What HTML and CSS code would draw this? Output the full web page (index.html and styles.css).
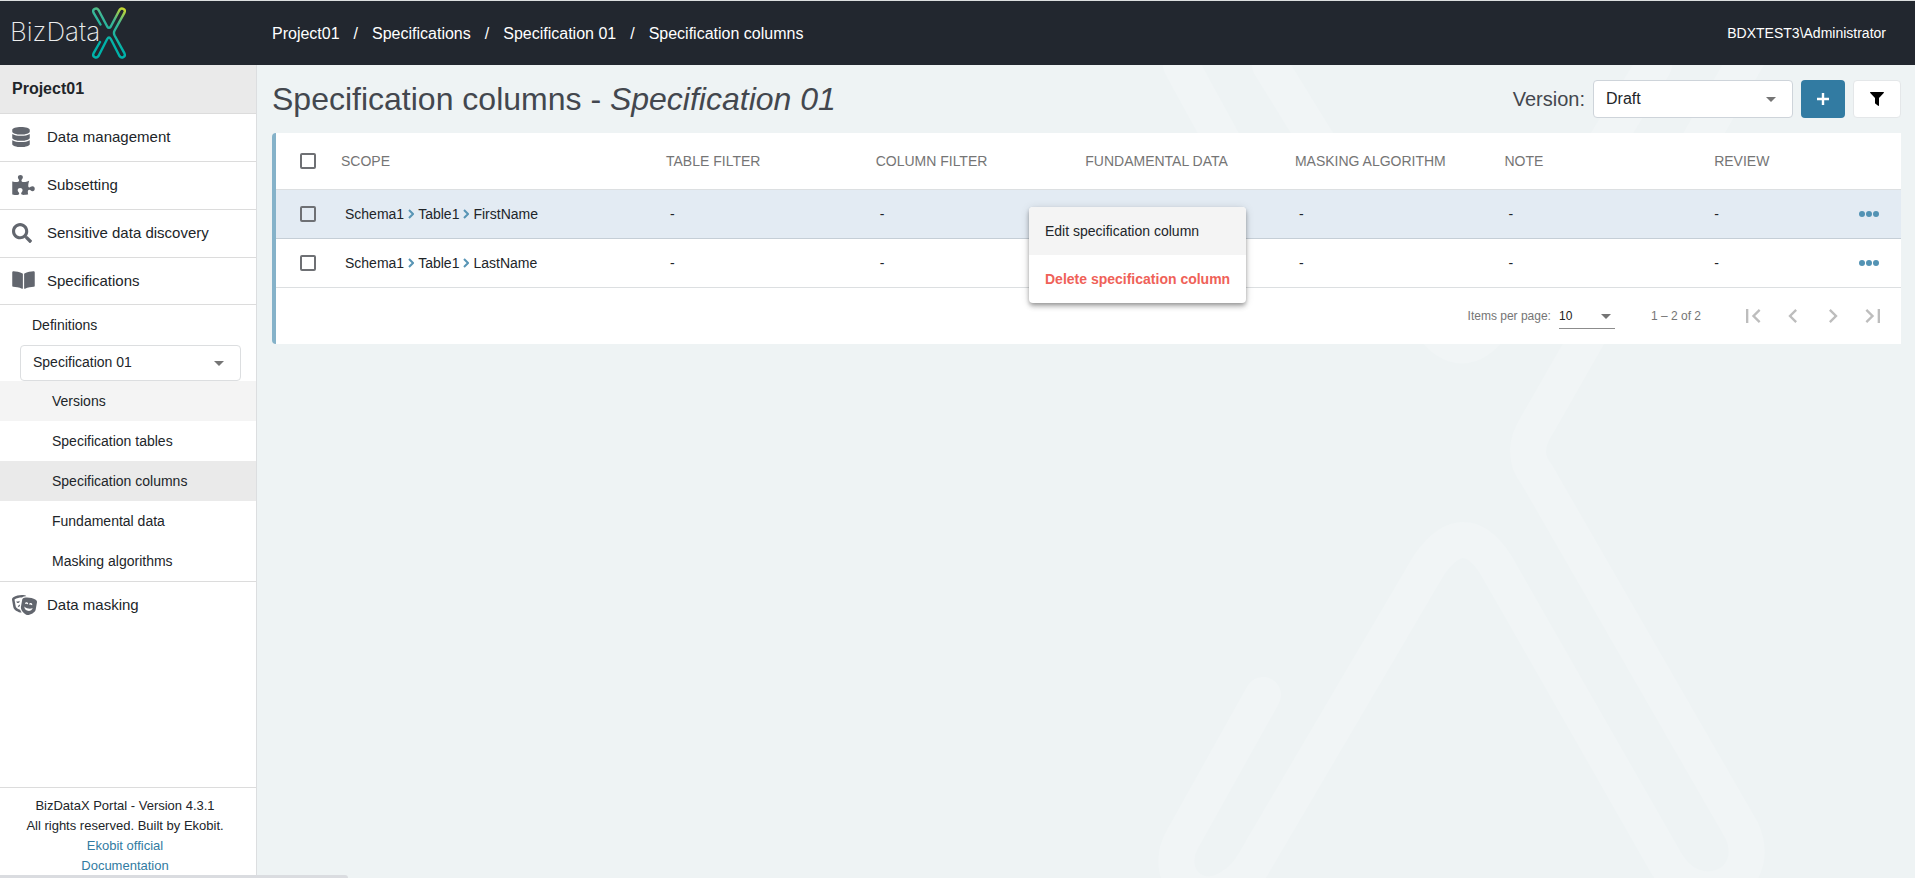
FILE: index.html
```html
<!DOCTYPE html>
<html lang="en">
<head>
<meta charset="utf-8">
<title>BizDataX Portal - Specification columns</title>
<link rel="stylesheet" href="styles.css">
</head>
<body>
<div class="app">
  <header class="topbar">
    <a class="logo" href="#" aria-label="BizDataX">
      <span class="logo-text">BizData</span>
      <svg class="logo-x" viewBox="0 0 34 52" width="34" height="52" aria-hidden="true">
        <defs>
          <linearGradient id="lg" gradientUnits="userSpaceOnUse" x1="33" y1="0" x2="14" y2="34">
            <stop offset="0" stop-color="#d9dc1f"/><stop offset=".45" stop-color="#3fb795"/><stop offset="1" stop-color="#00b2a9"/>
          </linearGradient>
        </defs>
        <g fill="none" stroke="url(#lg)" stroke-width="2.400" stroke-linecap="round" stroke-linejoin="round">
          <path d="M8.500 17.500L1.500 5.600C0 2 4.500 0 6.500 3L15.200 19.500Q17 22.300 18.800 19.500L27.500 3C29.500 0 34 2 32.500 5.600L22.600 23.500Q21.300 26 22.600 28.500L32.500 46.400C34 50 29.500 52 27.500 49L18.800 32Q17 29 15.200 32L6.500 49C4.500 52 0 50 1.500 46.400L8 35"/>
        </g>
      </svg>
    </a>
    <nav class="crumbs" aria-label="Breadcrumb">
      <a href="#">Project01</a><span>/</span><a href="#">Specifications</a><span>/</span><a href="#">Specification 01</a><span>/</span><a href="#">Specification columns</a>
    </nav>
    <span class="user">BDXTEST3\Administrator</span>
  </header>

  <aside class="sidebar">
    <div class="project">Project01</div>
    <nav class="nav">
      <a class="nav-item" href="#">
        <svg class="icon" viewBox="0 0 448 512" width="18" height="20"><path d="M448 73.143v45.714C448 159.143 347.667 192 224 192S0 159.143 0 118.857V73.143C0 32.857 100.333 0 224 0s224 32.857 224 73.143zM448 176v102.857C448 319.143 347.667 352 224 352S0 319.143 0 278.857V176c48.125 33.143 136.208 48.572 224 48.572S399.874 209.143 448 176zm0 160v102.857C448 479.143 347.667 512 224 512S0 479.143 0 438.857V336c48.125 33.143 136.208 48.572 224 48.572S399.874 369.143 448 336z"/></svg>
        Data management</a>
      <a class="nav-item" href="#">
        <svg class="icon" viewBox="0 0 576 512" width="23" height="20"><path d="M519.442 288.651c-41.519 0-59.5 31.593-82.058 31.593C377.409 320.244 432 144 432 144s-196.288 80-196.288-3.297c0-35.827 36.288-46.25 36.288-85.985C272 19.216 243.885 0 210.539 0c-34.654 0-66.366 18.891-66.366 56.346 0 41.364 31.711 59.277 31.711 81.75C175.885 207.719 0 166.758 0 166.758v333.237s178.635 41.047 178.635-28.662c0-22.473-40-40.107-40-81.471 0-37.456 29.25-56.346 63.577-56.346 33.673 0 61.788 19.216 61.788 54.717 0 39.735-36.288 50.158-36.288 85.985 0 60.803 129.675 25.73 181.23 25.73 0 0-34.725-120.101 25.827-120.101 35.962 0 46.423 36.152 86.308 36.152C556.712 416 576 387.990 576 354.443c0-34.199-18.962-65.792-56.558-65.792z"/></svg>
        Subsetting</a>
      <a class="nav-item" href="#">
        <svg class="icon" viewBox="0 0 512 512" width="20" height="20"><path d="M505 442.700L405.300 343c-4.500-4.500-10.600-7-17-7H372c27.600-35.300 44-79.700 44-128C416 93.100 322.900 0 208 0S0 93.100 0 208s93.100 208 208 208c48.300 0 92.700-16.400 128-44v16.300c0 6.400 2.500 12.500 7 17l99.700 99.700c9.400 9.400 24.600 9.400 33.900 0l28.300-28.300c9.400-9.400 9.400-24.600.1-34zM208 336c-70.700 0-128-57.200-128-128 0-70.700 57.200-128 128-128 70.700 0 128 57.200 128 128 0 70.700-57.200 128-128 128z"/></svg>
        Sensitive data discovery</a>
      <a class="nav-item open" href="#">
        <svg class="icon" viewBox="0 0 576 512" width="23" height="20"><path d="M542.220 32.050c-54.800 3.110-163.720 14.430-230.960 55.590-4.640 2.840-7.270 7.890-7.270 13.170v363.870c0 11.550 12.630 18.850 23.280 13.490 69.180-34.820 169.230-44.320 218.700-46.920 16.890-.89 30.020-14.430 30.020-30.660V62.750c.010-17.710-15.350-31.740-33.770-30.700zM264.730 87.640C197.500 46.480 88.580 35.170 33.780 32.050 15.360 31.010 0 45.040 0 62.750V400.600c0 16.240 13.130 29.780 30.020 30.660 49.490 2.600 149.590 12.110 218.770 46.950 10.620 5.350 23.210-1.940 23.210-13.460V100.630c0-5.290-2.620-10.140-7.270-12.990z"/></svg>
        Specifications</a>
      <div class="subnav">
        <a class="definitions" href="#">Definitions</a>
        <div class="select-wrap side-select">
          <select aria-label="Specification"><option>Specification 01</option></select>
        </div>
        <a class="sub-item hovered" href="#">Versions</a>
        <a class="sub-item" href="#">Specification tables</a>
        <a class="sub-item active" href="#" aria-current="page">Specification columns</a>
        <a class="sub-item" href="#">Fundamental data</a>
        <a class="sub-item" href="#">Masking algorithms</a>
      </div>
      <a class="nav-item last" href="#">
        <svg class="icon" viewBox="0 0 640 512" width="25" height="20"><path d="M206.860 245.150c-35.880 10.450-59.950 41.200-57.530 74.100 11.400-12.720 28.810-23.700 49.900-30.920l7.630-43.180zM95.810 295L64.080 115.490c-.29-1.620.28-2.620.24-2.650 57.760-32.060 123.120-49.010 189.010-49.010 1.610 0 3.230.17 4.850.19 13.950-13.470 31.730-22.830 51.590-26 18.890-3.020 38.050-4.550 57.180-5.320-9.990-13.950-24.480-24.230-41.770-27C301.270 1.890 277.240 0 253.320 0 176.660 0 101.020 19.420 33.200 57.060 9.030 70.480-3.920 98.480 1.050 126.580l31.730 179.510c14.230 80.520 136.330 142.080 204.450 142.080 3.590 0 6.750-.46 10.010-.8-13.520-17.080-28.940-40.480-39.500-67.580-47.610-12.980-106.060-51.620-111.930-84.790zm97.550-137.460c-.73-4.120-2.230-7.870-4.070-11.400-8.250 8.910-20.670 15.750-35.320 18.320-14.650 2.580-28.670.4-39.480-5.170-.52 3.940-.64 7.980.09 12.100 3.840 21.700 24.580 36.190 46.340 32.370 21.750-3.820 36.280-24.520 32.440-46.220zM606.800 120.900c-88.980-49.380-191.430-67.410-291.980-51.350-27.310 4.360-49.080 26.260-54.040 54.360l-31.730 179.510c-15.390 87.050 95.280 196.270 158.310 207.350 63.030 11.090 204.470-53.790 219.860-140.840l31.730-179.510c4.970-28.110-7.980-56.110-32.150-69.520zM333.790 217.800c3.840-21.700 24.580-36.190 46.340-32.360 21.760 3.830 36.280 24.520 32.450 46.220-.73 4.120-2.230 7.870-4.070 11.400-8.250-8.910-20.670-15.750-35.320-18.320-14.650-2.580-28.670-.4-39.480 5.170-.53-3.950-.65-7.990.08-12.110zm72.700 187.880c-55.630-9.790-93.520-59.270-89.680-112.900 20.620 25.540 56.170 46.240 99.490 53.860 43.320 7.610 83.830.37 111.930-16.600-14.180 51.940-66.110 85.440-121.740 75.640zm107.340-140.650c-8.260-8.910-20.670-15.750-35.330-18.320-14.650-2.580-28.670-.4-39.480 5.170-.52-3.940-.64-7.980.09-12.100 3.840-21.700 24.580-36.190 46.340-32.370 21.750 3.830 36.280 24.520 32.450 46.220-.73 4.130-2.230 7.880-4.070 11.400z"/></svg>
        Data masking</a>
    </nav>
    <footer class="side-footer">
      <div>BizDataX Portal - Version 4.3.1</div>
      <div>All rights reserved. Built by Ekobit.</div>
      <a href="#">Ekobit official</a>
      <a href="#">Documentation</a>
    </footer>
  </aside>

  <main class="main">
    <svg class="backdrop" viewBox="0 0 760 813" width="760" height="813" aria-hidden="true">
      <g fill="none" stroke="#f1f5f6" stroke-width="36" stroke-linecap="round" stroke-linejoin="round">
        <path d="M108 630L27 775C8 810 40 845 76 822Q92 812 100 796L274 500Q309 450 341 500L510 796C540 850 610 820 587 766L382 410Q364 388 382 360L588 0L600 -20"/>
        <path d="M499 0L341 256Q307 305 273 256L115 0"/>
        <path d="M26 0L160 245"/>
      </g>
    </svg>
    <div class="page-head">
      <h1>Specification columns - <em>Specification 01</em></h1>
      <div class="tools">
        <label for="version">Version:</label>
        <div class="select-wrap version-select">
          <select id="version"><option>Draft</option></select>
        </div>
        <button class="btn-add" type="button" aria-label="Add">
          <svg viewBox="0 0 12 12" width="12" height="12"><path d="M6 0V12M0 6H12" stroke="#fff" stroke-width="2.400"/></svg>
        </button>
        <button class="btn-filter" type="button" aria-label="Filter">
          <svg viewBox="0 0 14 14" width="14" height="14"><path d="M.5 0H13.500Q14.300.3 13.700 1L9 6V13.500Q8.800 14.200 8.100 13.800L5.500 11.800Q5 11.500 5 11V6L.3 1Q-.3.300.5 0Z"/></svg>
        </button>
      </div>
    </div>

    <section class="card">
      <table class="grid">
        <thead>
          <tr>
            <th class="c-check"><input type="checkbox" aria-label="Select all"></th>
            <th class="c-scope">Scope</th><th class="c-mid">Table filter</th><th class="c-mid">Column filter</th><th class="c-mid">Fundamental data</th><th class="c-mid">Masking algorithm</th><th class="c-mid">Note</th><th>Review</th>
          </tr>
        </thead>
        <tbody>
          <tr class="selected">
            <td><input type="checkbox" aria-label="Select FirstName"></td>
            <td class="indent"><span class="path">Schema1<svg viewBox="0 0 6 10" width="6" height="10"><path d="M1 1L5 5L1 9"/></svg>Table1<svg viewBox="0 0 6 10" width="6" height="10"><path d="M1 1L5 5L1 9"/></svg>FirstName</span></td>
            <td class="indent">-</td><td class="indent">-</td><td class="indent">-</td><td class="indent">-</td><td class="indent">-</td>
            <td><div class="last-cell">-<button class="more" type="button" aria-label="Row actions"><svg viewBox="0 0 20 6" width="20" height="6"><circle cx="3" cy="3" r="3"/><circle cx="10" cy="3" r="3"/><circle cx="17" cy="3" r="3"/></svg></button></div></td>
          </tr>
          <tr>
            <td><input type="checkbox" aria-label="Select LastName"></td>
            <td class="indent"><span class="path">Schema1<svg viewBox="0 0 6 10" width="6" height="10"><path d="M1 1L5 5L1 9"/></svg>Table1<svg viewBox="0 0 6 10" width="6" height="10"><path d="M1 1L5 5L1 9"/></svg>LastName</span></td>
            <td class="indent">-</td><td class="indent">-</td><td class="indent">-</td><td class="indent">-</td><td class="indent">-</td>
            <td><div class="last-cell">-<button class="more" type="button" aria-label="Row actions"><svg viewBox="0 0 20 6" width="20" height="6"><circle cx="3" cy="3" r="3"/><circle cx="10" cy="3" r="3"/><circle cx="17" cy="3" r="3"/></svg></button></div></td>
          </tr>
        </tbody>
      </table>
      <div class="pager">
        <label for="size">Items per page:</label>
        <div class="select-wrap size-select">
          <select id="size"><option>10</option></select>
        </div>
        <span class="range">1 – 2 of 2</span>
        <button type="button" aria-label="First page" disabled><svg viewBox="0 0 24 24" width="28" height="28"><path d="M18.410 16.590L13.820 12l4.590-4.590L17 6l-6 6 6 6zM6 6h2v12H6z"/></svg></button>
        <button type="button" aria-label="Previous page" disabled><svg viewBox="0 0 24 24" width="28" height="28"><path d="M15.410 7.410L14 6l-6 6 6 6 1.410-1.410L10.830 12z"/></svg></button>
        <button type="button" aria-label="Next page" disabled><svg viewBox="0 0 24 24" width="28" height="28"><path d="M10 6L8.590 7.410 13.170 12l-4.580 4.590L10 18l6-6z"/></svg></button>
        <button type="button" aria-label="Last page" disabled><svg viewBox="0 0 24 24" width="28" height="28"><path d="M5.590 7.410L10.180 12l-4.590 4.590L7 18l6-6-6-6zM16 6h2v12h-2z"/></svg></button>
      </div>
    </section>
  </main>
</div>
<div class="menu" role="menu">
  <button class="hovered" type="button" role="menuitem">Edit specification column</button>
  <button class="danger" type="button" role="menuitem">Delete specification column</button>
</div>
<div class="status-bubble"></div>
</body>
</html>
```
FILE: styles.css
```css
* { box-sizing: border-box; }

body {
  margin: 0;
  font-family: "Liberation Sans", Arial, sans-serif;
  font-size: 14px;
  color: #212529;
}

a { color: inherit; text-decoration: none; }

button, select, input { font: inherit; color: inherit; margin: 0; }

button { border: 0; padding: 0; background: none; cursor: pointer; }

svg { display: block; flex: none; }

.app {
  display: grid;
  grid-template-columns: 257px minmax(0, 1fr);
  grid-template-rows: auto minmax(0, 1fr);
  height: 100vh;
}

/* Top bar */
.topbar {
  grid-column: 1 / -1;
  display: flex;
  align-items: center;
  height: 65px;
  padding-right: 29px;
  border-top: 1px solid #dcdfdf;
  background: #22272f;
  color: #fff;
}

.logo { display: flex; align-items: center; width: 272px; padding-left: 10px; }

.logo-text {
  padding-bottom: 3px;
  color: #eceded;
  font-family: Inter, "Open Sans", sans-serif;
  font-weight: 200;
  font-size: 26px;
  line-height: 32px;
}

.logo-x { margin-left: -8px; }

.crumbs { display: flex; flex: 1; gap: 14px; padding-top: 2px; font-size: 16px; }

/* Sidebar */
.sidebar {
  display: flex;
  flex-direction: column;
  border-right: 1px solid #dcdee0;
  background: #fff;
}

.project {
  padding: 0 12px;
  border-bottom: 1px solid #dcdcdc;
  background: #eaeaea;
  font-size: 16px;
  font-weight: bold;
  line-height: 48px;
}

.nav { flex: 1; }

.nav-item {
  display: grid;
  grid-template-columns: 35px 1fr;
  align-items: center;
  height: 48px;
  padding: 0 0 2px 12px;
  border-bottom: 1px solid #dcdcdc;
  font-size: 15px;
}

.nav-item.open { height: 47px; }

.nav-item.last { height: 47px; border-bottom: 0; }

.icon { fill: #62666e; }

.subnav { border-bottom: 1px solid #dcdcdc; }

.definitions { display: block; padding-left: 32px; line-height: 40px; }

.select-wrap { position: relative; }

.select-wrap select {
  appearance: none;
  width: 100%;
  border: 1px solid #dcdee0;
  border-radius: 4px;
  background: #fff;
}

.select-wrap::after {
  content: "";
  position: absolute;
  top: 50%;
  right: 17px;
  margin-top: -2px;
  border: 5px solid transparent;
  border-top-color: #757575;
  border-bottom: 0;
  pointer-events: none;
}

.side-select { margin: 0 15px 0 20px; }

.side-select select { display: block; height: 36px; padding: 0 12px 2px; }

.sub-item { display: block; padding-left: 52px; line-height: 40px; }

.sub-item.hovered { background: #f4f4f4; }

.sub-item.active { background: #eaeaea; }

.side-footer {
  padding: 8px 6px 2px 0;
  border-top: 1px solid #dcdcdc;
  font-size: 13px;
  line-height: 20px;
  text-align: center;
}

.side-footer a { display: block; color: #327ba2; }

/* Main area */
.main {
  position: relative;
  overflow: hidden;
  padding: 0 14px 0 15px;
  background: #eef3f4;
}

.backdrop { position: absolute; top: 0; right: 0; }

.page-head {
  position: relative;
  display: flex;
  align-items: center;
  justify-content: space-between;
  height: 68px;
}

h1 { margin: 0; color: #43474e; font-size: 32px; font-weight: normal; }

.tools { display: flex; align-items: center; gap: 8px; }

.tools label { color: #43474e; font-size: 20px; }

.version-select { width: 200px; }

.version-select select {
  display: block;
  height: 38px;
  padding: 0 12px 2px;
  border-color: #ced4da;
  font-size: 16px;
}

.btn-add, .btn-filter {
  display: flex;
  align-items: center;
  justify-content: center;
  height: 38px;
  border-radius: 4px;
}

.btn-add { width: 44px; background: #327ba2; }

.btn-filter { width: 48px; border: 1px solid #e4e7e9; background: #fff; }

.card {
  position: relative;
  border-left: 4px solid #85b2c9;
  border-radius: 4px 0 0 4px;
  background: #fff;
}

.grid { width: 100%; table-layout: fixed; border-collapse: separate; border-spacing: 0; }

.grid th, .grid td { padding: 0; border-bottom: 1px solid #dcdfe1; text-align: left; }

.grid th { height: 57px; color: #757575; font-weight: normal; text-transform: uppercase; }

.grid td { height: 49px; }

.grid .selected td { border-color: #c5ced6; background: #e3ebf3; }

.grid .indent { padding-left: 4px; }

.c-check { width: 4%; }

.c-scope { width: 20%; }

.c-mid { width: 12.9%; }

.grid input {
  appearance: none;
  display: block;
  width: 16px;
  height: 16px;
  margin-left: 24px;
  border: 2px solid #6e7074;
  border-radius: 2px;
}

.path { display: flex; align-items: center; gap: 4px; }

.path svg { fill: none; stroke: #5895b5; stroke-width: 2; }

.last-cell { display: flex; align-items: center; justify-content: space-between; padding-right: 22px; }

.more svg { fill: #5393b4; }

.pager {
  display: flex;
  align-items: center;
  justify-content: flex-end;
  height: 56px;
  padding-right: 8px;
  color: #757575;
  font-size: 12px;
}

.size-select { width: 56px; margin-left: 8px; }

.size-select select {
  display: block;
  height: 26px;
  border: 0;
  border-bottom: 1px solid #8c8c8c;
  border-radius: 0;
  color: #212121;
}

.size-select::after { right: 4px; }

.range { margin: 0 32px 0 36px; }

.pager button { display: flex; justify-content: center; width: 40px; cursor: default; }

.pager button svg { fill: #bdbdbd; }

/* Context menu opened over the table */
.menu {
  position: absolute;
  top: 207px;
  left: 1029px;
  overflow: hidden;
  border-radius: 4px;
  background: #fff;
  box-shadow: 0 2px 4px -1px rgba(0, 0, 0, .3), 0 4px 5px rgba(0, 0, 0, .16), 0 1px 10px rgba(0, 0, 0, .12);
}

.menu button { display: block; width: 100%; padding: 0 16px; line-height: 48px; text-align: left; }

.menu .hovered { background: #f4f4f4; }

.menu .danger { color: #ef6158; font-weight: bold; }

.status-bubble {
  position: fixed;
  bottom: 0;
  left: 0;
  width: 348px;
  height: 3px;
  border-top-right-radius: 4px;
  background: #dadce0;
}
```
